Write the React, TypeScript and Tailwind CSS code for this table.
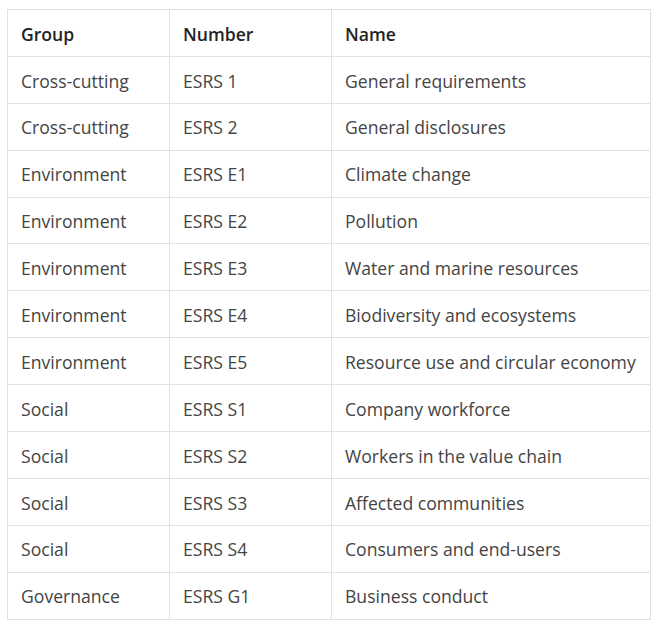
import React from "react";

const rows: [string, string, string][] = [
  ["Cross-cutting", "ESRS 1", "General requirements"],
  ["Cross-cutting", "ESRS 2", "General disclosures"],
  ["Environment", "ESRS E1", "Climate change"],
  ["Environment", "ESRS E2", "Pollution"],
  ["Environment", "ESRS E3", "Water and marine resources"],
  ["Environment", "ESRS E4", "Biodiversity and ecosystems"],
  ["Environment", "ESRS E5", "Resource use and circular economy"],
  ["Social", "ESRS S1", "Company workforce"],
  ["Social", "ESRS S2", "Workers in the value chain"],
  ["Social", "ESRS S3", "Affected communities"],
  ["Social", "ESRS S4", "Consumers and end-users"],
  ["Governance", "ESRS G1", "Business conduct"],
];

export default function App() {
  return (
    <div className="bg-white w-[657px] h-[625px] pt-[9px] pl-[7px] font-['Open_Sans',sans-serif]">
      <table className="border-collapse w-[643px] table-fixed text-[17.6px] leading-none">
        <colgroup>
          <col className="w-[162px]" />
          <col className="w-[162px]" />
          <col className="w-[319px]" />
        </colgroup>
        <thead>
          <tr className="h-[46.9px]">
            {["Group", "Number", "Name"].map((h) => (
              <th key={h} className="border border-[#e1e1e1] text-left font-semibold text-[#242424] pl-[13px] pt-[3px] pb-0">
                {h}
              </th>
            ))}
          </tr>
        </thead>
        <tbody>
          {rows.map((r, i) => (
            <tr key={i} className="h-[46.9px]">
              {r.map((c, j) => (
                <td key={j} className="border border-[#e1e1e1] text-[#444444] pl-[13px] pt-[3px] pb-0 whitespace-nowrap">
                  {c}
                </td>
              ))}
            </tr>
          ))}
        </tbody>
      </table>
    </div>
  );
}
